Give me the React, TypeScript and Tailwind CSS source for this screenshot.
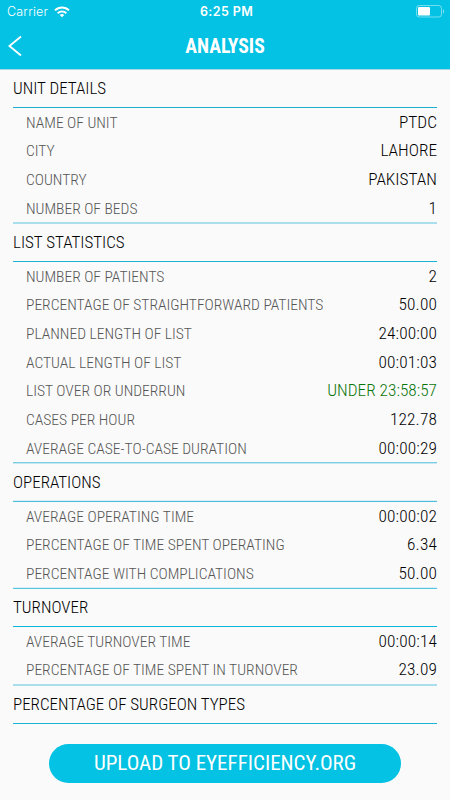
import { clsx } from "clsx";

type Row = { label: string; value: string; good?: boolean };

type Section = {
  title: string;
  titleClass: string;
  rule: string;
  rows: Row[];
  rowsClass?: string;
  endRule?: string;
};

const sections: Section[] = [
  {
    title: "UNIT DETAILS",
    titleClass: "h-[37px]",
    rule: "h-px bg-[#1badcb]",
    rowsClass: "h-[114px]",
    rows: [
      { label: "NAME OF UNIT", value: "PTDC" },
      { label: "CITY", value: "LAHORE" },
      { label: "COUNTRY", value: "PAKISTAN" },
      { label: "NUMBER OF BEDS", value: "1" },
    ],
    endRule: "h-0.5 bg-[#abdeed]",
  },
  {
    title: "LIST STATISTICS",
    titleClass: "h-[37px]",
    rule: "h-px bg-[#1bb3d3]",
    rowsClass: "h-[200px]",
    rows: [
      { label: "NUMBER OF PATIENTS", value: "2" },
      { label: "PERCENTAGE OF STRAIGHTFORWARD PATIENTS", value: "50.00" },
      { label: "PLANNED LENGTH OF LIST", value: "24:00:00" },
      { label: "ACTUAL LENGTH OF LIST", value: "00:01:03" },
      { label: "LIST OVER OR UNDERRUN", value: "UNDER 23:58:57", good: true },
      { label: "CASES PER HOUR", value: "122.78" },
      { label: "AVERAGE CASE-TO-CASE DURATION", value: "00:00:29" },
    ],
    endRule: "h-0.5 border-t border-[#7ccde4] bg-[#c5e7f1]",
  },
  {
    title: "OPERATIONS",
    titleClass: "h-[36px] pt-px",
    rule: "h-0.5 border-b border-[#4fbdd9] bg-[#d9eff6]",
    rowsClass: "h-[85px]",
    rows: [
      { label: "AVERAGE OPERATING TIME", value: "00:00:02" },
      { label: "PERCENTAGE OF TIME SPENT OPERATING", value: "6.34" },
      { label: "PERCENTAGE WITH COMPLICATIONS", value: "50.00" },
    ],
    endRule: "h-0.5 border-b border-[#55c5e1] bg-[#d9eff6]",
  },
  {
    title: "TURNOVER",
    titleClass: "h-[37px]",
    rule: "h-px bg-[#09b6d9]",
    rowsClass: "h-[57px]",
    rows: [
      { label: "AVERAGE TURNOVER TIME", value: "00:00:14" },
      { label: "PERCENTAGE OF TIME SPENT IN TURNOVER", value: "23.09" },
    ],
    endRule: "h-0.5 bg-[#abdeed]",
  },
  {
    title: "PERCENTAGE OF SURGEON TYPES",
    titleClass: "h-[37px]",
    rule: "h-px bg-[#1bb3d3]",
    rows: [],
  },
];

const StatusBar = () => (
  <div className="grid h-[23px] grid-cols-3 items-center pl-[7px] pr-[5px] font-[Inter,sans-serif] leading-none">
    <div className="flex items-center gap-1.5 text-[12.5px] tracking-[0.2px]">
      <span className="pt-0.5">Carrier</span>
      <svg width="16" height="12" viewBox="0 0 16 12" fill="none" stroke="white" strokeWidth="2">
        <path d="M1 4.4a10 10 0 0 1 14 0" />
        <path d="M3.7 7.2a6.1 6.1 0 0 1 8.6 0" />
        <path d="M8 11.3 5.7 9a3.3 3.3 0 0 1 4.6 0z" fill="white" stroke="none" />
      </svg>
    </div>
    <div className="pl-px pt-0.5 text-center text-[12.5px] font-semibold tracking-[0.4px]">6:25 PM</div>
    <svg className="justify-self-end" width="29" height="13" viewBox="0 0 29 13">
      <rect x="0.5" y="0.5" width="25" height="11.5" rx="2.8" fill="none" stroke="white" strokeOpacity="0.45" />
      <rect x="2" y="2" width="12" height="8.5" rx="1" fill="white" />
      <path d="M27 4.2c1.6.7 1.6 3.6 0 4.3z" fill="white" fillOpacity="0.5" />
    </svg>
  </div>
);

const Header = () => (
  <header className="h-[70px] border-b border-[#a9d8e3] bg-[#03c2e3] text-white">
    <StatusBar />
    <div className="grid h-[46px] grid-cols-3 items-center px-2">
      <svg width="14" height="22" viewBox="0 0 14 22" fill="none" stroke="white" strokeWidth="1.8">
        <path d="M13 1.5 1.4 11 13 20.5" />
      </svg>
      <h1 className="pt-px text-center text-[19.7px] font-bold">ANALYSIS</h1>
    </div>
  </header>
);

const StatSection = ({ title, titleClass, rule, rows, rowsClass, endRule }: Section) => (
  <section>
    <h2 className={clsx("flex items-center text-[17px] font-[350]", titleClass)}>{title}</h2>
    <div className={rule} />
    {rows.length > 0 && (
      <dl className={clsx("pl-[13px]", rowsClass)}>
        {rows.map((row) => (
          <div key={row.label} className="flex h-[28.7px] items-center justify-between leading-none">
            <dt className="pt-0.5 text-[15.55px] text-[#565656]">{row.label}</dt>
            <dd
              className={clsx(
                "text-[17.3px] font-[350]",
                /^\d/.test(row.value) && "tracking-[0.15px]",
                row.good && "text-[#0a760a]",
              )}
            >
              {row.value}
            </dd>
          </div>
        ))}
      </dl>
    )}
    {endRule && <div className={endRule} />}
  </section>
);

const App = () => {
  return (
    <div className="flex h-[800px] w-[450px] flex-col overflow-hidden bg-[#fafafa] font-['Roboto_Condensed',Roboto,sans-serif] font-light text-black [font-stretch:75%]">
      <Header />
      <main className="px-[13px]">
        {sections.map((s) => (
          <StatSection key={s.title} {...s} />
        ))}
      </main>
      <button className="mx-auto mt-5 flex h-[39px] w-[352px] items-center justify-center rounded-full bg-[#03c2e3] text-[21px] font-normal text-white">
        UPLOAD TO EYEFFICIENCY.ORG
      </button>
    </div>
  );
};

export default App;
